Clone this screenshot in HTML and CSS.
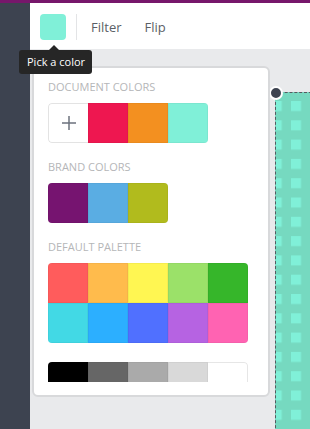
FILE: index.html
```html
<!DOCTYPE html>
<html lang="en">
<head>
    <meta charset="UTF-8">
    <title>Color picker</title>
    <link rel="stylesheet" href="styles.css">
</head>
<body>
    <div class="topline"></div>
    <div class="app">
        <div class="sidebar"></div>
        <div class="work">
            <div class="toolbar">
                <button class="color-btn"></button>
                <span class="divider"></span>
                <span class="tool">Filter</span>
                <span class="tool">Flip</span>
            </div>
            <div class="canvas">
                <!-- selected element on the page -->
                <div class="element">
                    <svg class="checker" width="60" height="360">
                        <defs>
                            <pattern id="dots" x="15" y="8" width="19.3" height="19.3" patternUnits="userSpaceOnUse">
                                <rect width="10" height="10" fill="#80f0d8"/>
                            </pattern>
                        </defs>
                        <rect width="60" height="360" fill="#76d9c0"/>
                        <rect width="60" height="360" fill="url(#dots)"/>
                    </svg>
                    <span class="handle"></span>
                </div>

                <!-- color popover -->
                <div class="panel">
                    <div class="panel-inner">
                        <h4 class="label">Document colors</h4>
                        <div class="swatches">
                            <div class="swatch add">
                                <svg width="16" height="16" viewBox="0 0 16 16"><path d="M8 1v14M1 8h14" stroke="#6c727d" stroke-width="1.5" fill="none"/></svg>
                            </div>
                            <div class="swatch" style="background:#ee1750"></div>
                            <div class="swatch" style="background:#f39020"></div>
                            <div class="swatch" style="background:#80f0d8"></div>
                        </div>

                        <h4 class="label">Brand colors</h4>
                        <div class="swatches">
                            <div class="swatch" style="background:#761470"></div>
                            <div class="swatch" style="background:#5aade3"></div>
                            <div class="swatch" style="background:#b1bb1d"></div>
                        </div>

                        <h4 class="label">Default palette</h4>
                        <div class="swatches grid">
                            <div class="swatch" style="background:#ff5c5c"></div>
                            <div class="swatch" style="background:#ffbb4c"></div>
                            <div class="swatch" style="background:#fff652"></div>
                            <div class="swatch" style="background:#9be169"></div>
                            <div class="swatch" style="background:#36b62a"></div>
                            <div class="swatch" style="background:#42d9e5"></div>
                            <div class="swatch" style="background:#2cafff"></div>
                            <div class="swatch" style="background:#5070ff"></div>
                            <div class="swatch" style="background:#b663e2"></div>
                            <div class="swatch" style="background:#ff63b2"></div>
                        </div>

                        <div class="swatches grays">
                            <div class="swatch" style="background:#000000"></div>
                            <div class="swatch" style="background:#666666"></div>
                            <div class="swatch" style="background:#aaaaaa"></div>
                            <div class="swatch" style="background:#d9d9d9"></div>
                            <div class="swatch white"></div>
                        </div>
                    </div>
                </div>
            </div>
        </div>

        <!-- tooltip -->
        <div class="tooltip">Pick a color</div>
    </div>
</body>
</html>
```

FILE: styles.css
```css
html, body {
    margin: 0;
    padding: 0;
}

body {
    width: 310px;
    height: 429px;
    overflow: hidden;
    font-family: "Open Sans", "Noto Sans", sans-serif;
    background-color: #e9eaec;
}

.topline {
    height: 3px;
    background-color: #77176b;
}

.app {
    position: relative;
    display: flex;
    height: 426px;
}

.sidebar {
    width: 30px;
    background-color: #3d4350;
}

.work {
    flex: 1;
    display: flex;
    flex-direction: column;
}

.toolbar {
    height: 46px;
    display: flex;
    align-items: center;
    padding-left: 10px;
    padding-top: 1px;
    box-sizing: border-box;
    background-color: #ffffff;
}

.color-btn {
    width: 26px;
    height: 26px;
    border: none;
    padding: 0;
    border-radius: 4px;
    background-color: #80f0d8;
}

.divider {
    width: 1px;
    height: 26px;
    margin: 0 14px 0 10px;
    background-color: #e3e4e6;
}

.tool {
    font-size: 13px;
    color: #5b5f66;
    margin-right: 23px;
}

.canvas {
    position: relative;
    flex: 1;
    overflow: hidden;
    background-color: #e9eaec;
}

/* selected element with dashed outline */
.element {
    position: absolute;
    left: 245px;
    top: 43px;
    width: 60px;
    height: 360px;
    border-top: 1px dashed #555a60;
    border-left: 1px dashed #555a60;
    background-color: #76d9c0;
}

.checker {
    display: block;
}

.handle {
    position: absolute;
    left: -7px;
    top: -7px;
    width: 10px;
    height: 10px;
    border-radius: 50%;
    border: 2px solid #ffffff;
    background-color: #3d4350;
}

/* popover */
.panel {
    position: absolute;
    left: 2px;
    top: 17px;
    width: 206px;
    height: 302px;
    padding: 12px 14px 13px 14px;
    background-color: #ffffff;
    border: 2px solid #d8d9db;
    border-radius: 6px;
}

.panel-inner {
    height: 100%;
    overflow: hidden;
}

.label {
    margin: 0 0 9px 0;
    font-size: 11px;
    line-height: 14px;
    font-weight: normal;
    text-transform: uppercase;
    color: #b5b6b8;
}

.swatches {
    display: flex;
    margin-bottom: 17px;
    border-radius: 4px;
    overflow: hidden;
    width: max-content;
}

.swatch {
    width: 40px;
    height: 40px;
    box-shadow: inset 0 0 0 1px rgba(0, 0, 0, 0.04);
}

.swatch.add {
    display: flex;
    align-items: center;
    justify-content: center;
    box-sizing: border-box;
    border: 1px solid #e3e3e3;
    border-right: none;
    border-radius: 4px 0 0 4px;
    box-shadow: none;
}

.swatches.grid {
    display: grid;
    grid-template-columns: repeat(5, 40px);
    margin-bottom: 19px;
}

.swatch.white {
    box-sizing: border-box;
    border: 1px solid #e6e6e6;
    border-left: none;
    border-radius: 0 4px 4px 0;
    background-color: #ffffff;
    box-shadow: none;
}

/* tooltip */
.tooltip {
    position: absolute;
    left: 19px;
    top: 47px;
    height: 24px;
    padding: 0 7px 0 8px;
    line-height: 24px;
    font-size: 11px;
    color: #ffffff;
    background-color: #262626;
    border-radius: 3px;
    white-space: nowrap;
}

.tooltip::before {
    content: "";
    position: absolute;
    left: 30px;
    top: -5px;
    border-left: 5px solid transparent;
    border-right: 5px solid transparent;
    border-bottom: 5px solid #262626;
}
```
